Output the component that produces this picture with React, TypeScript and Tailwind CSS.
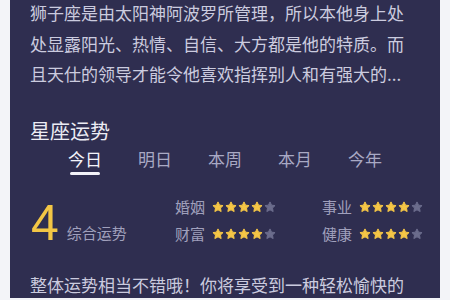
import React from 'react'

const cjk = { fontFamily: '"Noto Sans CJK SC", "Noto Sans", sans-serif' }

const Star: React.FC<{ on: boolean }> = ({ on }) => (
  <svg viewBox="0 0 24 24" className="w-[12px] h-[12px]">
    <path
      d="M12 1.8l3.1 6.5 7 .9-5.1 4.9 1.3 7-6.3-3.4-6.3 3.4 1.3-7L1.9 9.2l7-.9z"
      fill={on ? '#f5c646' : '#6b6c8c'}
      stroke={on ? '#f5c646' : '#6b6c8c'}
      strokeWidth="2"
      strokeLinejoin="round"
    />
  </svg>
)

const Rating: React.FC<{ label: string; score: number }> = ({ label, score }) => (
  <div className="flex items-center h-[27px]">
    <span className="text-[15px] text-[#a0a0bc] w-[37px]">{label}</span>
    <div className="flex gap-[1px]">
      {[0, 1, 2, 3, 4].map((i) => (
        <Star key={i} on={i < score} />
      ))}
    </div>
  </div>
)

const tabs = ['今日', '明日', '本周', '本月', '今年']

export default function App() {
  return (
    <div className="h-[300px] overflow-hidden bg-[#f3f4f8] px-[10px]" style={cjk}>
      <div className="h-full bg-[#2f2e50] pl-5 pr-4">
        <p className="-mt-[2px] text-[17px] leading-[30.5px] text-[#cbcbdf]">
          <span className="block whitespace-nowrap">狮子座是由太阳神阿波罗所管理，所以本他身上处</span>
          <span className="block whitespace-nowrap">处显露阳光、热情、自信、大方都是他的特质。而</span>
          <span className="block whitespace-nowrap">且天仕的领导才能令他喜欢指挥别人和有强大的...</span>
        </p>

        <h2 className="mt-[27px] text-[20px] leading-[28px] text-[#ececf4]">星座运势</h2>

        <div className="mt-[2px] ml-5 flex">
          {tabs.map((t, i) => (
            <div key={t} className="w-[70px] flex flex-col items-center">
              <span
                className={`text-[17px] leading-[24px] ${i === 0 ? 'text-[#f4f4fa]' : 'text-[#a9a9c4]'}`}
              >
                {t}
              </span>
              <span
                className={`mt-[1px] h-[3px] w-[30px] rounded-full ${i === 0 ? 'bg-[#f2f2f8]' : 'bg-transparent'}`}
              />
            </div>
          ))}
        </div>

        <div className="mt-[19px] flex">
          <div className="w-[145px] flex items-end pl-[1px] h-[54px]">
            <span
              className="text-[50px] leading-none text-[#f3c645]"
              style={{ fontFamily: '"Liberation Sans", Arial, sans-serif' }}
            >
              4
            </span>
            <span className="ml-[8px] mb-[3px] text-[15px] text-[#a0a0bc]">综合运势</span>
          </div>
          <div className="w-[147px]">
            <Rating label="婚姻" score={4} />
            <Rating label="财富" score={4} />
          </div>
          <div>
            <Rating label="事业" score={4} />
            <Rating label="健康" score={4} />
          </div>
        </div>

        <p className="mt-[22px] text-[17px] leading-[30.5px] text-[#cbcbdf] whitespace-nowrap">
          整体运势相当不错哦！你将享受到一种轻松愉快的
        </p>
      </div>
    </div>
  )
}
